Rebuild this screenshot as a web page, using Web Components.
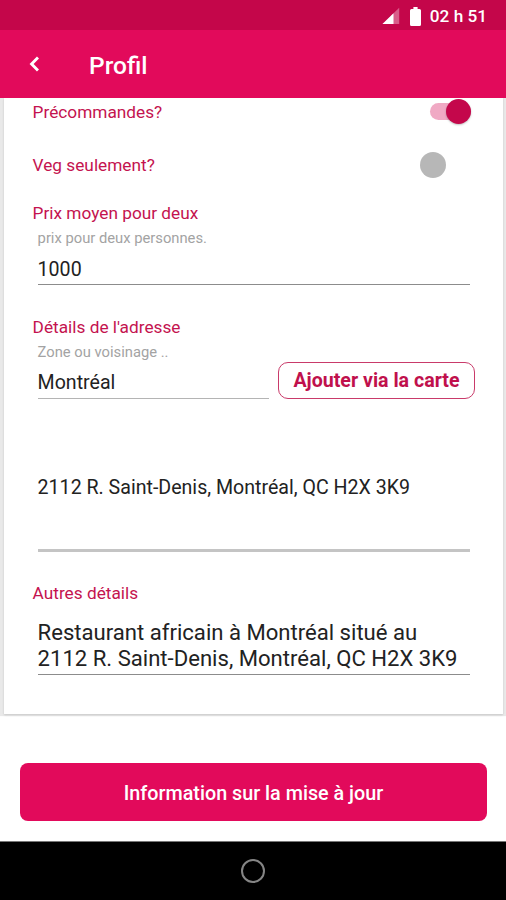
<!DOCTYPE html>
<html lang="fr">
<head>
<meta charset="utf-8">
<title>Profil</title>
<style>
	body {
		margin: 0;
		background: #fff;
		font-family: Roboto, "Liberation Sans", sans-serif;
	}
</style>
</head>
<body>
<profile-screen>
	<status-bar slot="top" time="02 h 51"></status-bar>
	<app-header slot="top">Profil</app-header>

	<form-card>
		<toggle-row style="--gap: 2px" checked>Précommandes?</toggle-row>
		<toggle-row style="--gap: 29px">Veg seulement?</toggle-row>
		<section-label style="--gap: 24px">Prix moyen pour deux</section-label>
		<text-field style="--gap: 3px; --hint-gap: 10px; --after: 2px" hint="prix pour deux personnes.">1000</text-field>
		<section-label style="--gap: 30px">Détails de l'adresse</section-label>
		<field-row>
			<text-field style="--gap: 3px; --line: #b4b4b4" hint="Zone ou voisinage ..">Montréal</text-field>
			<outline-button>Ajouter via la carte</outline-button>
		</field-row>
		<text-field style="--gap: 77px; --line: #c4c4c4; --line-width: 3px; --after: 49px">2112 R. Saint-Denis, Montréal, QC H2X 3K9</text-field>
		<section-label style="--gap: 29px">Autres détails</section-label>
		<text-field style="--gap: 15px; --size: 22.1px; --leading: 25.5px; --after: 3px">Restaurant africain à Montréal situé au<br>2112 R. Saint-Denis, Montréal, QC H2X 3K9</text-field>
	</form-card>

	<primary-button>Information sur la mise à jour</primary-button>
	<nav-bar slot="bottom"></nav-bar>
</profile-screen>

<script>
class BaseElement extends HTMLElement {
	constructor() {
		super();
		this.attachShadow({ mode: 'open' });
	}

	connectedCallback() {
		this.shadowRoot.innerHTML = this.template();
	}
}

class ProfileScreen extends BaseElement {
	template() {
		return `
			<style>
				:host {
					display: flex;
					flex-direction: column;
					width: 506px;
					height: 900px;
					overflow: hidden;
				}
				main {
					flex: 1;
					min-height: 0;
					overflow: hidden;
				}
			</style>
			<slot name="top"></slot>
			<main><slot></slot></main>
			<slot name="bottom"></slot>
		`;
	}
}

class StatusBar extends BaseElement {
	template() {
		return `
			<style>
				:host {
					display: flex;
					justify-content: flex-end;
					align-items: center;
					box-sizing: border-box;
					height: 30px;
					padding: 2px 19px 0 0;
					background: #c4064a;
					color: #fff;
				}
				svg { display: block; }
				.signal { margin-right: 10px; }
				.battery { margin-right: 9px; }
				span {
					font-size: 17.2px;
					font-weight: 500;
					line-height: 28px;
				}
			</style>
			<svg class="signal" width="18" height="18" viewBox="0 0 18 18">
				<path d="M17.2 0.8V17H0.5z" fill="#fff" opacity="0.35"/>
				<path d="M11.5 6.3V17H0.5z" fill="#fff"/>
			</svg>
			<svg class="battery" width="11" height="19" viewBox="0 0 11 19">
				<path d="M3.4 0h4.2v2H9.5Q11 2 11 3.5v14Q11 19 9.5 19h-8Q0 19 0 17.5v-14Q0 2 1.5 2h1.9z" fill="#fff"/>
			</svg>
			<span>${this.getAttribute('time')}</span>
		`;
	}
}

class AppHeader extends BaseElement {
	template() {
		return `
			<style>
				:host {
					display: flex;
					align-items: center;
					box-sizing: border-box;
					height: 68px;
					padding-left: 29px;
					background: #e20a5b;
					color: #fff;
				}
				svg { display: block; margin-right: 50px; }
				h1 {
					margin: 3px 0 0;
					font-size: 24.5px;
					font-weight: 500;
					line-height: 30px;
				}
			</style>
			<svg width="10" height="16" viewBox="0 0 10 16" fill="none" stroke="#fff" stroke-width="2.9">
				<path d="M9 1.5L2.6 8L9 14.5"/>
			</svg>
			<h1><slot></slot></h1>
		`;
	}
}

class FormCard extends BaseElement {
	template() {
		return `
			<style>
				:host {
					display: flex;
					flex-direction: column;
					box-sizing: border-box;
					height: 616px;
					margin: 0 3px 0 4px;
					padding: 0 33px 0 28.6px;
					background: #fff;
					box-shadow: 0 1px 2px #c8c8c8, 0 -2px 1px 4px #e9e9e9;
				}
			</style>
			<slot></slot>
		`;
	}
}

class ToggleRow extends BaseElement {
	template() {
		return `
			<style>
				:host {
					display: flex;
					justify-content: space-between;
					align-items: center;
					height: 24px;
					margin-top: var(--gap, 0);
					color: #c4134f;
					font-size: 17.25px;
				}
				.switch {
					display: flex;
					align-items: center;
					justify-content: flex-end;
					box-sizing: border-box;
					width: 41px;
					height: 17px;
					margin: -1px -1px 0 0;
					border-radius: 9px;
				}
				.thumb {
					flex: none;
					width: 25px;
					height: 25px;
					border-radius: 50%;
					background: #c4074b;
					box-shadow: 0 1px 2px rgba(0, 0, 0, 0.25);
				}
				:host([checked]) .switch { background: #f0a9c4; }
				:host(:not([checked])) .switch { margin-right: 24px; }
				:host(:not([checked])) .thumb {
					width: 26px;
					height: 26px;
					background: #b7b7b7;
					box-shadow: none;
				}
			</style>
			<slot></slot>
			<div class="switch"><div class="thumb"></div></div>
		`;
	}
}

class SectionLabel extends BaseElement {
	template() {
		return `
			<style>
				:host {
					display: block;
					margin-top: var(--gap, 0);
					color: #c4134f;
					font-size: 17.25px;
					line-height: 24px;
				}
			</style>
			<slot></slot>
		`;
	}
}

class TextField extends BaseElement {
	template() {
		const hint = this.getAttribute('hint');
		return `
			<style>
				:host {
					display: block;
					margin: var(--gap, 0) 0 0 5px;
				}
				.hint {
					height: 20px;
					margin-bottom: var(--hint-gap, 9px);
					color: #a3a3a3;
					font-size: 14.75px;
					line-height: 20px;
				}
				.value {
					padding-bottom: var(--after, 3px);
					border-bottom: var(--line-width, 1.5px) solid var(--line, #8c8c8c);
					color: #222;
					font-size: var(--size, 19.6px);
					line-height: var(--leading, 24px);
					white-space: nowrap;
				}
			</style>
			${hint ? `<div class="hint">${hint}</div>` : ''}
			<div class="value"><slot></slot></div>
		`;
	}
}

class FieldRow extends BaseElement {
	template() {
		return `
			<style>
				:host {
					display: grid;
					grid-template-columns: 236.4px 197px;
					column-gap: 9px;
					align-items: end;
				}
			</style>
			<slot></slot>
		`;
	}
}

class OutlineButton extends BaseElement {
	template() {
		return `
			<style>
				:host { display: block; }
				button {
					display: block;
					width: 197px;
					height: 37px;
					padding: 0;
					border: 1.5px solid #c93a6a;
					border-radius: 10px;
					background: #fff;
					color: #c0104c;
					font: 700 19.6px/34px Roboto, "Liberation Sans", sans-serif;
				}
			</style>
			<button type="button"><slot></slot></button>
		`;
	}
}

class PrimaryButton extends BaseElement {
	template() {
		return `
			<style>
				:host {
					display: block;
					margin: 49px 19px 0 20px;
				}
				button {
					display: block;
					width: 100%;
					height: 58px;
					padding: 3px 0 0;
					border: 0;
					border-radius: 8px;
					background: #e20a5b;
					color: #fff;
					font: 500 19.75px/24px Roboto, "Liberation Sans", sans-serif;
				}
			</style>
			<button type="button"><slot></slot></button>
		`;
	}
}

class NavBar extends BaseElement {
	template() {
		return `
			<style>
				:host {
					display: flex;
					justify-content: center;
					align-items: center;
					box-sizing: border-box;
					height: 59px;
					border-top: 1px solid #777;
					background: #000;
				}
				.home {
					box-sizing: border-box;
					width: 24px;
					height: 24px;
					border: 2px solid #858585;
					border-radius: 50%;
				}
			</style>
			<div class="home"></div>
		`;
	}
}

customElements.define('profile-screen', ProfileScreen);
customElements.define('status-bar', StatusBar);
customElements.define('app-header', AppHeader);
customElements.define('form-card', FormCard);
customElements.define('toggle-row', ToggleRow);
customElements.define('section-label', SectionLabel);
customElements.define('text-field', TextField);
customElements.define('field-row', FieldRow);
customElements.define('outline-button', OutlineButton);
customElements.define('primary-button', PrimaryButton);
customElements.define('nav-bar', NavBar);
</script>
</body>
</html>
